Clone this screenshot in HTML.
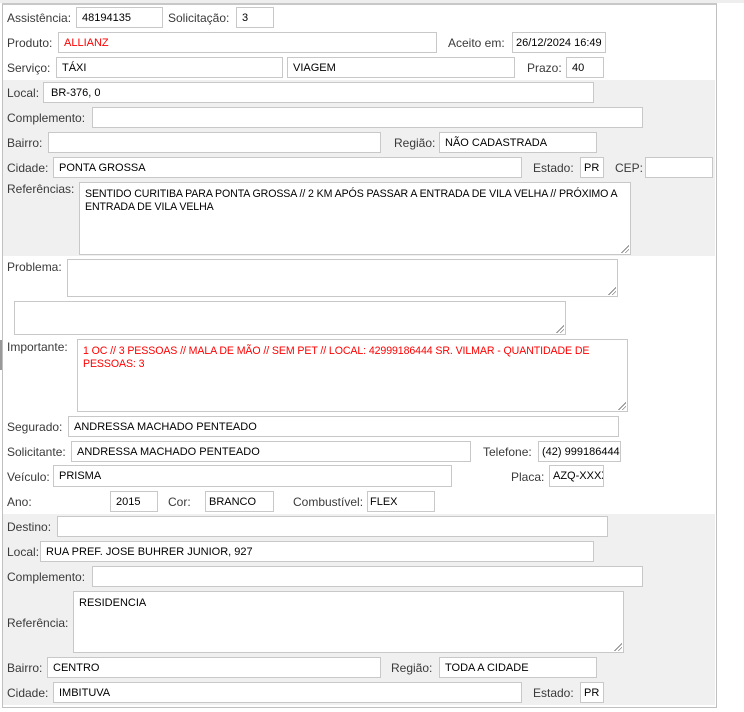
<!DOCTYPE html>
<html><head><meta charset="utf-8"><style>
body{margin:0;width:744px;height:712px;background:#fff;position:relative;overflow:hidden;font-family:"Liberation Sans",Tahoma,sans-serif;font-size:12px;color:#333}
.a{position:absolute}
.l{position:absolute;line-height:14px;color:#3a3a3a}
.i{position:absolute;box-sizing:border-box;border:1px solid #c8c8c8;background:#fff;color:#000;padding:4px 5px 0;line-height:13px;white-space:nowrap;overflow:hidden;font-size:11px}
.t{white-space:normal;padding-top:5px}
.g{background:#f0f0f0}
.red{color:#ff0000}
.rz{position:absolute;right:1px;bottom:1px;width:8px;height:8px;background:linear-gradient(135deg,transparent 50%,#888 50%,#888 58%,transparent 58%,transparent 72%,#888 72%,#888 80%,transparent 80%)}
</style></head><body>
<div class="a" style="left:0;top:0;width:744px;height:3px;background:#eee"></div>
<div class="a" style="left:2px;top:3px;width:713px;height:702px;border:1px solid #c0c0c0;border-top:2px solid #c8c8c8"></div>
<div class="a" style="left:0;top:340px;width:2px;height:30px;background:#999"></div>
<div class="a g" style="left:3px;top:80px;width:712px;height:176px"></div>
<div class="a g" style="left:3px;top:514px;width:712px;height:191px"></div>

<div class="l" style="left:7px;top:11px">Assistência:</div><div class="i" style="left:76px;top:7px;width:87px;height:21px">48194135</div>
<div class="l" style="left:168px;top:11px">Solicitação:</div><div class="i" style="left:236px;top:7px;width:38px;height:21px">3</div>
<div class="l" style="left:7px;top:36px">Produto:</div><div class="i red" style="left:58px;top:32px;width:379px;height:21px">ALLIANZ</div>
<div class="l" style="left:448px;top:36px">Aceito em:</div><div class="i" style="left:512px;top:32px;width:94px;height:21px;padding-left:3px">26/12/2024 16:49</div>
<div class="l" style="left:7px;top:61px">Serviço:</div><div class="i" style="left:56px;top:57px;width:227px;height:21px">TÁXI</div>
<div class="i" style="left:287px;top:57px;width:228px;height:21px">VIAGEM</div>
<div class="l" style="left:527px;top:61px">Prazo:</div><div class="i" style="left:566px;top:57px;width:38px;height:21px">40</div>

<div class="l" style="left:7px;top:86px">Local:</div><div class="i" style="left:43px;top:82px;width:551px;height:21px;padding-left:7px">BR-376, 0</div>
<div class="l" style="left:7px;top:111px">Complemento:</div><div class="i" style="left:92px;top:107px;width:551px;height:21px"></div>
<div class="l" style="left:7px;top:136px">Bairro:</div><div class="i" style="left:48px;top:132px;width:333px;height:21px"></div>
<div class="l" style="left:394px;top:136px">Região:</div><div class="i" style="left:439px;top:132px;width:158px;height:21px">NÃO CADASTRADA</div>
<div class="l" style="left:7px;top:161px">Cidade:</div><div class="i" style="left:53px;top:157px;width:469px;height:21px">PONTA GROSSA</div>
<div class="l" style="left:533px;top:161px">Estado:</div><div class="i" style="left:580px;top:157px;width:24px;height:21px;padding-left:3px">PR</div>
<div class="l" style="left:615px;top:161px">CEP:</div><div class="i" style="left:645px;top:157px;width:68px;height:21px"></div>
<div class="l" style="left:7px;top:182px">Referências:</div><div class="i t" style="left:79px;top:182px;width:552px;height:73px;font-size:10.6px;letter-spacing:-0.1px">SENTIDO CURITIBA PARA PONTA GROSSA // 2 KM APÓS PASSAR A ENTRADA DE VILA VELHA // PRÓXIMO A ENTRADA DE VILA VELHA<div class="rz"></div></div>

<div class="l" style="left:7px;top:260px">Problema:</div><div class="i" style="left:67px;top:259px;width:551px;height:38px"><div class="rz"></div></div>
<div class="i" style="left:14px;top:301px;width:552px;height:34px"><div class="rz"></div></div>
<div class="l" style="left:7px;top:340px">Importante:</div><div class="i t red" style="left:77px;top:339px;width:551px;height:73px;font-size:10.6px;letter-spacing:-0.1px">1 OC // 3 PESSOAS // MALA DE MÃO // SEM PET // LOCAL: 42999186444 SR. VILMAR - QUANTIDADE DE PESSOAS: 3<div class="rz"></div></div>
<div class="l" style="left:7px;top:420px">Segurado:</div><div class="i" style="left:68px;top:416px;width:551px;height:21px">ANDRESSA MACHADO PENTEADO</div>
<div class="l" style="left:7px;top:445px">Solicitante:</div><div class="i" style="left:71px;top:441px;width:400px;height:21px">ANDRESSA MACHADO PENTEADO</div>
<div class="l" style="left:483px;top:445px">Telefone:</div><div class="i" style="left:538px;top:441px;width:83px;height:21px;padding-left:3px">(42) 999186444</div>
<div class="l" style="left:7px;top:470px">Veículo:</div><div class="i" style="left:53px;top:465px;width:399px;height:22px">PRISMA</div>
<div class="l" style="left:511px;top:470px">Placa:</div><div class="i" style="left:549px;top:465px;width:55px;height:22px;padding-left:3px">AZQ-XXXX</div>
<div class="l" style="left:7px;top:495px">Ano:</div><div class="i" style="left:110px;top:491px;width:48px;height:21px">2015</div>
<div class="l" style="left:168px;top:495px">Cor:</div><div class="i" style="left:205px;top:491px;width:69px;height:21px;padding-left:3px">BRANCO</div>
<div class="l" style="left:293px;top:495px">Combustível:</div><div class="i" style="left:367px;top:491px;width:68px;height:21px;padding-left:2px">FLEX</div>

<div class="l" style="left:7px;top:520px">Destino:</div><div class="i" style="left:57px;top:516px;width:551px;height:21px"></div>
<div class="l" style="left:7px;top:545px">Local:</div><div class="i" style="left:40px;top:541px;width:554px;height:21px">RUA PREF. JOSE BUHRER JUNIOR, 927</div>
<div class="l" style="left:7px;top:570px">Complemento:</div><div class="i" style="left:92px;top:566px;width:551px;height:21px"></div>
<div class="l" style="left:7px;top:616px">Referência:</div><div class="i t" style="left:73px;top:591px;width:551px;height:62px">RESIDENCIA<div class="rz"></div></div>
<div class="l" style="left:7px;top:661px">Bairro:</div><div class="i" style="left:47px;top:657px;width:334px;height:21px">CENTRO</div>
<div class="l" style="left:391px;top:661px">Região:</div><div class="i" style="left:439px;top:657px;width:158px;height:21px">TODA A CIDADE</div>
<div class="l" style="left:7px;top:686px">Cidade:</div><div class="i" style="left:53px;top:682px;width:469px;height:21px">IMBITUVA</div>
<div class="l" style="left:533px;top:686px">Estado:</div><div class="i" style="left:580px;top:682px;width:24px;height:21px;padding-left:3px">PR</div>
</body></html>
